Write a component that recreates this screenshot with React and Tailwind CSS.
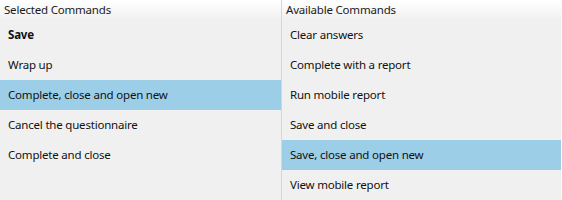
import React from "react";

const left = [
  { t: "Save", bold: true },
  { t: "Wrap up" },
  { t: "Complete, close and open new", sel: true },
  { t: "Cancel the questionnaire" },
  { t: "Complete and close" },
];
const right = [
  { t: "Clear answers" },
  { t: "Complete with a report" },
  { t: "Run mobile report" },
  { t: "Save and close" },
  { t: "Save, close and open new", sel: true },
  { t: "View mobile report" },
];

function Col({ title, items }) {
  return (
    <div className="flex flex-col flex-1 min-w-0">
      <div className="h-[20px] flex items-center pl-[4px] pb-[1px] bg-gradient-to-b from-[#ffffff] to-[#f0f0f0] text-[11.5px] tracking-[-0.2px] text-[#1a1a1a]">
        {title}
      </div>
      {items.map((it) => (
        <div
          key={it.t}
          className={`h-[30px] flex items-center pl-[8px] text-[11.5px] tracking-[-0.2px] text-[#111] ${it.sel ? "bg-[#9dcee8]" : ""} ${it.bold ? "font-bold" : ""}`}
        >
          {it.t}
        </div>
      ))}
    </div>
  );
}

export default function App() {
  return (
    <div
      className="w-[562px] h-[200px] bg-[#f0f0f0] flex overflow-hidden"
      style={{ fontFamily: '"Noto Sans", "Open Sans", sans-serif' }}
    >
      <div className="w-[281px] flex">
        <Col title="Selected Commands" items={left} />
      </div>
      <div className="w-px bg-[#d6d6d6]" />
      <div className="w-[279px] flex">
        <Col title="Available Commands" items={right} />
      </div>
      <div className="w-px bg-[#f8f8f8]" />
    </div>
  );
}
